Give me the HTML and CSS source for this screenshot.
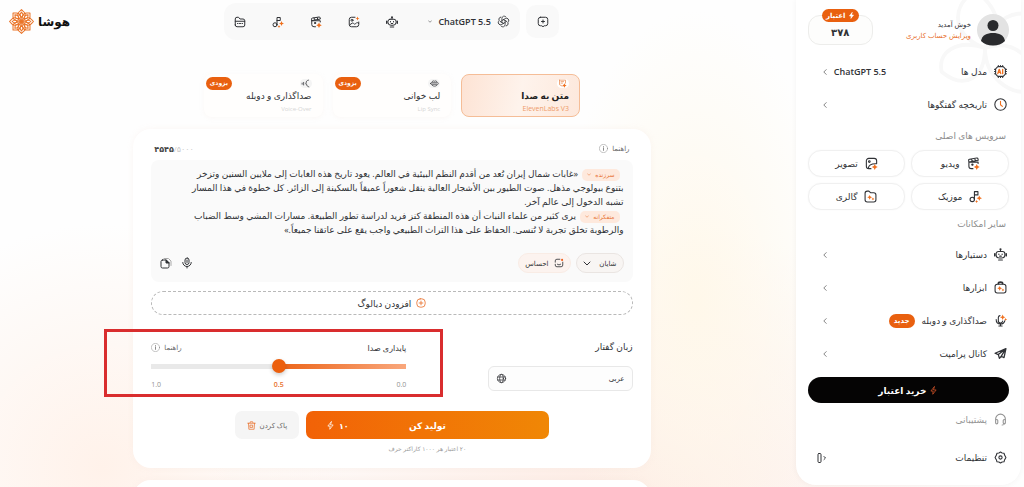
FILE: index.html
```html
<!DOCTYPE html>
<html lang="fa" dir="rtl">
<head>
<meta charset="utf-8">
<meta name="viewport" content="width=device-width, initial-scale=1">
<title>هوشا</title>
<link rel="stylesheet" href="styles.css">
</head>
<body>
<svg class="sprite" aria-hidden="true">
  <symbol id="robot" viewBox="0 0 24 24"><circle cx="12" cy="2.500" r="2" fill="currentColor" stroke="none"/><path d="M12 3v3M8 6.500h8a4 4 0 0 1 4 4V13a6 5.500 0 0 1-6 5.500h-4A6 5.500 0 0 1 4 13v-2.500a4 4 0 0 1 4-4zM8.500 22h7"/><path d="M1.500 10.500v4M22.500 10.500v4" stroke-width="3"/><path d="M9 11v1M15 11v1M10.500 15h3"/></symbol>
  <symbol id="image" viewBox="0 0 24 24"><path d="M14 2.500H7A4.500 4.500 0 0 0 2.500 7v10A4.500 4.500 0 0 0 7 21.500h10a4.500 4.500 0 0 0 4.500-4.500v-5"/><circle cx="8" cy="8.500" r="2"/><path d="M3 18l5-3.500c2-1.400 3 .5 4.500 1.500s2.500-.5 4-2 3-1 5 1"/><path class="spark" d="M19 1l1.200 2.800L23 5l-2.800 1.200L19 9l-1.200-2.800L15 5l2.800-1.200z"/></symbol>
  <symbol id="picture" viewBox="0 0 24 24"><path d="M21.500 12V7A4.500 4.500 0 0 0 17 2.500H7A4.500 4.500 0 0 0 2.500 7v10A4.500 4.500 0 0 0 7 21.500h4"/><circle cx="8" cy="8.500" r="1.500"/><path d="M6 21c1-6 6-9 15-8.500"/><path class="spark" d="M18 13l1.800 3.700L23.500 18.500l-3.700 1.800L18 24l-1.800-3.700-3.700-1.800 3.700-1.800z"/></symbol>
  <symbol id="video" viewBox="0 0 24 24"><path d="M11 21.500H8A4.500 4.500 0 0 1 3.500 17V9.500h17V12M3.500 9.500L3 6.500a2 2 0 0 1 1.600-2.300L18 2a2 2 0 0 1 2.300 1.600l.4 2.400-17 3.200M8 4l2 4M14 3l2 4"/><circle cx="10" cy="14" r="1.200" fill="currentColor"/><path class="spark" d="M18 13l1.800 3.700L23.500 18.500l-3.700 1.800L18 24l-1.800-3.700-3.700-1.800 3.700-1.800z"/></symbol>
  <symbol id="music" viewBox="0 0 24 24"><circle cx="6" cy="17.500" r="4"/><path d="M10 17.500V3h6.500v6H10"/><path class="spark" d="M19 10l1.500 3.500L24 15l-3.500 1.500L19 20l-1.500-3.500L14 15l3.500-1.500zM14 18.500l1 1.700 1.700 1-1.700 1-1 1.700-1-1.700-1.700-1 1.700-1z"/></symbol>
  <symbol id="folder" viewBox="0 0 24 24"><path d="M2.500 18V6A3.500 3.500 0 0 1 6 2.500h3L12 6h6a3.500 3.500 0 0 1 3.500 3.500V18a3.500 3.500 0 0 1-3.500 3.500H6A3.500 3.500 0 0 1 2.500 18zM2.500 10.500h19M7 15h1M11 15h2M16 15h1"/></symbol>
  <symbol id="gallery" viewBox="0 0 24 24"><path d="M2 18V6A4 4 0 0 1 6 2h3l3 3h6a4 4 0 0 1 4 4v9a4 4 0 0 1-4 4H6a4 4 0 0 1-4-4z"/><path class="spark" d="M10.500 9l1.400 3 3.100 1.500-3.100 1.400-1.400 3.100-1.500-3.100L6 13.500 9 12zM16.500 14l1 1.500 1.500 1-1.500 1-1 1.500-1-1.500-1.500-1 1.500-1z"/></symbol>
  <symbol id="tools" viewBox="0 0 24 24"><rect x="2" y="6" width="20" height="16" rx="4"/><path d="M8 5c0-2.500 1-3 4-3s4 .5 4 3" stroke-width="3"/><path class="spark" d="M10.500 9l1.400 3 3.100 1.500-3.100 1.400-1.400 3.100-1.500-3.100L6 13.500 9 12zM16.500 14l1 1.500 1.500 1-1.500 1-1 1.500-1-1.500-1.500-1 1.500-1z"/></symbol>
  <symbol id="mic" viewBox="0 0 24 24"><rect x="8" y="2" width="8" height="13" rx="4"/><path d="M3.500 11a8.500 8 0 0 0 17 0M12 19v3M12 6v5"/></symbol>
  <symbol id="dub" viewBox="0 0 24 24"><path d="M11 3a3.500 3.500 0 0 0-3 3.500V12a4 4 0 0 0 8 1M4 10c0 5 3 8.500 8 8.500s7-2.500 8-6M12 18.500V22M9 22h6"/><path class="spark" d="M16 1l1.600 3.600L21 6l-3.400 1.600L16 11l-1.600-3.400L11 6l3.400-1.400zM21.500 7.500l1 1.500 1.500 1-1.500 1-1 1.500-1-1.500-1.500-1 1.500-1z"/></symbol>
  <symbol id="plane" viewBox="0 0 24 24"><path d="M22 3L2 11.500l6 2.500 2 7 3.500-4 5 2.500zM8 14l14-11-8.500 14" stroke-width="2.400"/></symbol>
  <symbol id="chev" viewBox="0 0 10 16"><path d="M8 2L2 8l6 6"/></symbol>
  <symbol id="chevdown" viewBox="0 0 16 10"><path d="M2 2l6 6 6-6"/></symbol>
  <symbol id="info" viewBox="0 0 24 24"><circle cx="12" cy="12" r="11"/><path d="M12 10.500V17M12 7v.5" stroke-width="2"/></symbol>
  <symbol id="bolt" viewBox="0 0 24 24"><path d="M14 2L5 13.500h6L10 22l9-11.500h-6z"/></symbol>
  <symbol id="plusbox" viewBox="0 0 24 24"><rect x="2" y="2" width="20" height="20" rx="8"/><path d="M12 7.500v9M7.500 12h9"/></symbol>
  <symbol id="newchat" viewBox="0 0 24 24"><path d="M7 2.500h10A4.500 4.500 0 0 1 21.500 7v8a4.500 4.500 0 0 1-4.500 4.500h-2.500L12 21.500l-2.500-2H7A4.500 4.500 0 0 1 2.500 15V7A4.500 4.500 0 0 1 7 2.500zM12 8v6M9 11h6"/></symbol>
</svg>

<div class="app">
  <aside class="sidebar">
    <svg class="watermark" viewBox="0 0 100 100" aria-hidden="true"><path d="M50 50C20 40 10 10 40-10C65 10 70 30 50 50ZM50 50C80 40 105 60 100 95C75 100 50 80 50 50ZM50 50C50 80 30 95 5 75C0 55 20 40 50 50ZM50 50C60 20 80 5 110 20"/></svg>
    <div class="profile">
      <svg class="avatar" viewBox="0 0 32 32" aria-hidden="true"><circle cx="16" cy="16" r="16" fill="#e3e3e3"/><circle cx="16" cy="11.500" r="5.500" fill="#292a2d"/><path d="M4 27c1-6 6-8 12-8s11 2 12 8c-6 6-18 6-24 0z" fill="#292a2d"/></svg>
      <div class="welcome"><span>خوش آمدید</span><a href="#">ویرایش حساب کاربری</a></div>
      <div class="credit"><span class="credit-tag"><svg class="solid"><use href="#bolt"/></svg>اعتبار</span><strong>۳۷۸</strong></div>
    </div>

    <nav class="menu">
      <a class="item" href="#"><svg class="icon" viewBox="0 0 24 24"><path d="M7 3h10l4 4v10l-4 4H7l-4-4V7zM8 1v2M12 1v2M16 1v2M8 21v2M12 21v2M16 21v2M1 8h2M1 12h2M1 16h2M21 8h2M21 12h2M21 16h2"/><path d="M7 16l2.500-8h.5l2.500 8M8 13.500h4M16 8v8" stroke="#f0701e" stroke-width="2.400"/></svg><span>مدل ها</span><b class="model">ChatGPT 5.5</b><svg class="chev"><use href="#chev"/></svg></a>
      <a class="item" href="#"><svg class="icon" viewBox="0 0 24 24"><circle cx="12" cy="12" r="10.500"/><path d="M12 6v6.500l3.500 3" stroke="#f0701e"/></svg><span>تاریخچه گفتگوها</span><svg class="chev"><use href="#chev"/></svg></a>
    </nav>
    <h2 class="group">سرویس های اصلی</h2>
    <div class="services">
      <button type="button"><svg class="icon"><use href="#video"/></svg>ویدیو</button>
      <button type="button"><svg class="icon"><use href="#picture"/></svg>تصویر</button>
      <button type="button"><svg class="icon"><use href="#music"/></svg>موزیک</button>
      <button type="button"><svg class="icon"><use href="#gallery"/></svg>گالری</button>
    </div>
    <h2 class="group">سایر امکانات</h2>
    <nav class="menu">
      <a class="item" href="#"><svg class="icon"><use href="#robot"/></svg><span>دستیارها</span><svg class="chev"><use href="#chev"/></svg></a>
      <a class="item" href="#"><svg class="icon"><use href="#tools"/></svg><span>ابزارها</span><svg class="chev"><use href="#chev"/></svg></a>
      <a class="item" href="#"><svg class="icon"><use href="#dub"/></svg><span>صداگذاری و دوبله</span><b class="pill">جدید</b><svg class="chev"><use href="#chev"/></svg></a>
      <a class="item" href="#"><svg class="icon"><use href="#plane"/></svg><span>کانال پرامپت</span><svg class="chev"><use href="#chev"/></svg></a>
    </nav>
    <button class="buy" type="button"><svg><use href="#bolt"/></svg>خرید اعتبار</button>
    <nav class="menu">
      <a class="item muted" href="#"><svg class="icon" viewBox="0 0 24 24"><path d="M3 15v-4a9 9 0 0 1 18 0v4M3 14a2 2 0 0 1 4 0v4a2 2 0 0 1-4 0zM17 14a2 2 0 0 1 4 0v4a2 2 0 0 1-4 0zM20 19c-1 2-2 3-5 3"/></svg><span>پشتیبانی</span></a>
    </nav>
    <div class="item settings"><svg class="icon" viewBox="0 0 24 24"><path d="M12 2l3 1.600 3.500.4 1 3.500L22 12l-2.500 4.500-1 3.500-3.500.4L12 22l-3-1.600-3.500-.4-1-3.500L2 12l2.500-4.500 1-3.500L9 3.600z"/><circle cx="12" cy="12" r="3"/></svg><a href="#">تنظیمات</a><button class="collapse" type="button" aria-label="بستن منو"><svg viewBox="0 0 20 24"><rect x="2" y="3" width="6" height="18" rx="2"/><path d="M14 9l3 3-3 3"/></svg></button></div>
  </aside>

  <div class="page">
    <header class="topbar">
      <div class="toolbar">
        <button class="new-chat" type="button" aria-label="گفتگوی جدید"><svg><use href="#newchat"/></svg></button>
        <div class="modes">
          <label class="model-pick">
            <svg class="gpt" viewBox="0 0 24 24" aria-hidden="true"><path id="petal" d="M9 13.700V6.300a4.300 4.300 0 0 1 7.600-2.700"/><use href="#petal" transform="rotate(60 12 12)"/><use href="#petal" transform="rotate(120 12 12)"/><use href="#petal" transform="rotate(180 12 12)"/><use href="#petal" transform="rotate(240 12 12)"/><use href="#petal" transform="rotate(300 12 12)"/></svg>
            <select aria-label="مدل" dir="ltr"><option>ChatGPT 5.5</option></select>
            <svg class="caret"><use href="#chevdown"/></svg>
          </label>
          <button type="button" aria-label="دستیار"><svg><use href="#robot"/></svg></button>
          <button type="button" aria-label="تصویر"><svg><use href="#image"/></svg></button>
          <button type="button" aria-label="ویدیو"><svg><use href="#video"/></svg></button>
          <button type="button" aria-label="موزیک"><svg><use href="#music"/></svg></button>
          <button type="button" aria-label="گالری"><svg><use href="#folder"/></svg></button>
        </div>
      </div>
      <a class="brand" href="#"><span>هوشا</span><svg viewBox="0 0 48 48" aria-hidden="true"><g id="leafset"><path id="leaf" d="M24 24l-6-9c-2-4-1-8 3-11l3-3 3 3c4 3 5 7 3 11zM24 16l-3-4c0-3 1-4 3-6 2 2 3 3 3 6z"/><use href="#leaf" transform="rotate(90 24 24)"/><use href="#leaf" transform="rotate(180 24 24)"/><use href="#leaf" transform="rotate(270 24 24)"/></g><use href="#leafset" transform="rotate(45 24 24)"/></svg></a>
    </header>

    <main class="content">
      <div class="tabs">
        <button class="tab active" type="button"><span class="tab-icon"><svg viewBox="0 0 24 24"><path d="M4 3h16v8M11 19l-7-4V3M8 7h7M8 11h4"/><path class="spark" d="M17 11l2 4 4 2-4 2-2 4-2-4-4-2 4-2z"/></svg></span><b>متن به صدا</b><small dir="ltr">ElevenLabs V3</small></button>
        <button class="tab" type="button"><span class="tab-icon"><svg viewBox="0 0 24 24"><path d="M2 12c2-4 5-7 8-7l2 1 2-1c3 0 6 3 8 7-2 4-5 7-10 7S4 16 2 12zM6 10h12M6 14h12"/></svg></span><b>لب خوانی</b><small dir="ltr">Lip Sync</small><span class="soon">بزودی</span></button>
        <button class="tab" type="button"><span class="tab-icon"><svg viewBox="0 0 24 24"><path d="M20 3c-5 1-7 4-6 8l-2 2 3 1c0 4 2 6 6 7M7 9v7M3 11v3"/></svg></span><b>صداگذاری و دوبله</b><small dir="ltr">Voice-Over</small><span class="soon">بزودی</span></button>
      </div>

      <section class="card">
        <div class="card-head"><a class="help" href="#">راهنما<svg><use href="#info"/></svg></a><div class="count" dir="ltr"><b>۴۵۴۵</b>/۵۰۰۰</div></div>
        <div class="editor">
          <div class="script" role="textbox" aria-multiline="true" aria-label="متن گفتار">
            <p><button class="mood" type="button">سرزنده<svg><use href="#chevdown"/></svg></button> «غابات شمال إيران تُعد من أقدم النظم البيئية في العالم. يعود تاريخ هذه الغابات إلى ملايين السنين وتزخر<br>بتنوع بيولوجي مذهل. صوت الطيور بين الأشجار العالية ينقل شعوراً عميقاً بالسكينة إلى الزائر. كل خطوة في هذا المسار<br>تشبه الدخول إلى عالم آخر.</p>
            <p><button class="mood" type="button">متفکرانه<svg><use href="#chevdown"/></svg></button> يرى كثير من علماء النبات أن هذه المنطقة كنز فريد لدراسة تطور الطبيعة. مسارات المشي وسط الضباب<br>والرطوبة تخلق تجربة لا تُنسى. الحفاظ على هذا التراث الطبيعي واجب يقع على عاتقنا جميعاً.»</p>
          </div>
          <div class="editor-bar">
            <label class="voice"><select aria-label="گوینده"><option>شایان</option></select><svg><use href="#chevdown"/></svg></label>
            <button class="feeling" type="button"><svg viewBox="0 0 24 24"><path d="M14 3H7a4 4 0 0 0-4 4v3M3 15v2a4 4 0 0 0 4 4h10a4 4 0 0 0 4-4v-7M8 15c2 2 6 2 8 0"/><circle cx="19.500" cy="4.500" r="2.500" fill="#ed5c19" stroke="none"/></svg>احساس</button>
            <div class="editor-tools">
              <button type="button" aria-label="ضبط صدا"><svg><use href="#mic"/></svg></button>
              <button type="button" aria-label="رونوشت"><svg viewBox="0 0 24 24"><path d="M8 3h9l5 5v9" stroke="#aaa"/><path d="M5 6h7l6 6v7a3 3 0 0 1-3 3H5a3 3 0 0 1-3-3V9a3 3 0 0 1 3-3z"/><path d="M12 6v6h6z" fill="currentColor"/></svg></button>
            </div>
          </div>
        </div>
        <button class="add" type="button"><svg><use href="#plusbox"/></svg>افزودن دیالوگ</button>

        <div class="options">
          <div class="language">
            <label for="lang">زبان گفتار</label>
            <div class="field"><select id="lang"><option>عربی</option></select><svg viewBox="0 0 24 24"><circle cx="12" cy="12" r="11"/><ellipse cx="12" cy="12" rx="5" ry="11"/><path d="M2 8h20M2 16h20"/></svg></div>
          </div>
          <div class="stability">
            <div class="stability-head"><label for="stab">پایداری صدا</label><a class="help" href="#">راهنما<svg><use href="#info"/></svg></a></div>
            <input id="stab" type="range" min="0" max="1" step="0.1" value="0.5">
            <div class="scale"><span>0.0</span><b>0.5</b><span>1.0</span></div>
            <div class="highlight"></div>
          </div>
        </div>

        <div class="actions">
          <button class="generate" type="button"><span>تولید کن</span><span class="cost">۱۰<svg><use href="#bolt"/></svg></span></button>
          <button class="clear" type="button">پاک کردن<svg viewBox="0 0 24 24"><path d="M2 6h20M8 5l1-3h6l1 3M4 6l1 16h14l1-16M9 11h6v6H9z"/></svg></button>
          <p class="note">۲۰ اعتبار هر ۱۰۰۰ کاراکتر حرف</p>
        </div>
      </section>
      <section class="card next"></section>
    </main>
  </div>
</div>
</body>
</html>
```

FILE: styles.css
```css
* { box-sizing: border-box; }

body {
  margin: 0;
  font-family: "Open Sans", "DejaVu Sans", sans-serif;
  font-size: 9px;
  color: #303236;
  background:
    radial-gradient(ellipse 14% 60% at 68% 62%, #fff8ea 0%, transparent 100%),
    radial-gradient(ellipse 40% 60% at 60% 105%, #fdebe3 0%, transparent 100%),
    radial-gradient(ellipse 24% 50% at 10% 96%, #fff2ea 0%, transparent 100%),
    #fefefe;
}

button, select, input { font: inherit; color: inherit; }
button { border: 0; padding: 0; background: none; }
a { color: inherit; text-decoration: none; }
p, h2 { margin: 0; }

select {
  appearance: none;
  border: 0;
  padding: 0;
  background: none;
}

svg {
  width: 12px;
  height: 12px;
  flex: none;
  fill: none;
  stroke: currentColor;
  stroke-width: 2;
  stroke-linecap: round;
  stroke-linejoin: round;
  overflow: visible;
}

.sprite { position: absolute; width: 0; height: 0; }
.spark { fill: #f0701e; stroke: none; }
.solid { fill: currentColor; }

.app { display: flex; height: 100vh; overflow: hidden; }

/* Sidebar */
.sidebar {
  position: relative;
  isolation: isolate;
  flex: none;
  display: flex;
  flex-direction: column;
  width: 22%;
  margin: 0 3px 2px 12px;
  padding: 8px 12px;
  overflow: hidden;
  border-radius: 0 0 20px 20px;
  background: #fff;
  box-shadow: 0 0 6px #0000000c;
}

.watermark {
  position: absolute;
  z-index: -1;
  top: 0;
  right: -12px;
  width: 96px;
  height: 96px;
  stroke: #f8f8f8;
  stroke-width: 4;
}

.profile {
  position: relative;
  display: flex;
  align-items: center;
  gap: 6px;
  height: 47px;
  padding-bottom: 4px;
}

.avatar { width: 32px; height: 32px; stroke: none; }
.welcome { display: flex; flex-direction: column; font-size: 7px; line-height: 11px; }
.welcome a { color: #e8712e; }

.credit {
  position: relative;
  display: flex;
  justify-content: center;
  align-items: center;
  width: 65px;
  height: 30px;
  padding-top: 4px;
  margin-inline-start: auto;
  border: 1px solid #ededeb;
  border-radius: 12px;
  background: #fdfdfc;
  font-size: 10px;
}

.credit-tag {
  position: absolute;
  top: -7px;
  display: flex;
  align-items: center;
  gap: 2px;
  height: 13px;
  padding: 0 4px;
  border-radius: 7px;
  background: #e9600f;
  color: #fff;
  font-size: 7px;
  font-weight: bold;
}

.credit-tag svg { width: 7px; height: 7px; }

.item { display: flex; align-items: center; gap: 7px; height: 33px; padding: 0 2px; }
.icon { width: 13px; height: 13px; }
.chev { width: 4px; height: 8px; margin-inline: auto 13px; color: #666; }
.model { margin-inline-start: auto; font-weight: 600; }
.model + .chev { margin-inline-start: 0; }
.pill { padding: 0 5px; border-radius: 7px; background: #e9600f; color: #fff; font-size: 7px; line-height: 14px; }
.group { font-size: 9px; font-weight: normal; line-height: 29px; padding: 0 3px; color: #8b8b8b; }
.services + .group { line-height: 28px; }

.services { display: grid; grid-template-columns: 1fr 1fr; gap: 6px; }

.services button {
  display: flex;
  align-items: center;
  justify-content: center;
  gap: 7px;
  height: 27px;
  border: 1px solid #f0f0f0;
  border-radius: 13px;
  background: #fff;
  box-shadow: 0 0 2px #0000000a;
}

.buy {
  display: flex;
  flex: none;
  align-items: center;
  justify-content: center;
  gap: 3px;
  height: 26px;
  margin-top: 7px;
  border-radius: 13px;
  background: #050404;
  color: #fff;
  font-weight: bold;
}

.buy svg { width: 9px; height: 9px; color: #d7562a; }
.muted { color: #949494; }
.settings { margin-top: 5px; }
.collapse { margin-inline: auto 6px; height: 12px; }

/* Top bar */
.page { flex: 1; min-width: 0; }

.topbar {
  display: grid;
  grid-template-columns: 1fr auto 1fr;
  align-items: center;
  height: 43px;
  padding: 0 9px;
}

.toolbar { grid-column: 2; display: flex; align-items: center; gap: 6px; }
.new-chat { display: grid; place-items: center; width: 33px; height: 33px; border-radius: 10px; background: #f9f9f9; }

.modes {
  display: flex;
  align-items: center;
  gap: 26px;
  height: 37px;
  padding: 0 10px;
  border-radius: 12px;
  background: #f9f9f9;
}

.modes button, .modes button svg { display: block; width: 12px; height: 12px; }
.modes .spark { fill: currentColor; }
.model-pick { display: flex; align-items: center; gap: 6px; margin-inline-end: 4px; }
.model-pick select { font-weight: 600; }
.gpt { width: 13px; height: 13px; stroke-width: 1.5; }
.caret { width: 4px; height: 3px; }

.brand {
  display: flex;
  align-items: center;
  justify-self: end;
  gap: 4px;
  color: #111;
  font-size: 12px;
  font-weight: bold;
}

.brand svg { width: 25px; height: 25px; color: #ea7529; }

/* Tabs */
.content { display: flex; flex-direction: column; align-items: center; padding-top: 31px; }
.tabs { display: grid; grid-template-columns: repeat(3, 1fr); gap: 10px; width: 48%; }

.tab {
  position: relative;
  display: flex;
  flex-direction: column;
  align-items: flex-start;
  height: 43px;
  padding: 4px 10px;
  border: 1px solid transparent;
  border-radius: 8px;
  background: #fffefd;
  text-align: right;
}

.tab:not(.active) { box-shadow: 0 1px 4px #f5e7e040; }
.tab-icon { display: grid; place-items: center; width: 12px; height: 12px; border-radius: 6px; background: #f4f4f4; }
.tab-icon svg { width: 9px; height: 9px; }
.tab b { font-weight: normal; line-height: 16px; }
.tab small { font-size: 6px; line-height: 10px; color: #d5d5d5; }
.tab.active { border-color: #f5bd97; background: linear-gradient(100deg, #fde3d4, #fef3ec 50%, #fde8dc); }
.tab.active b { font-weight: bold; color: #222; }
.tab.active small { font-size: 7px; color: #ee9b69; }
.tab.active .tab-icon { color: #ea8b52; background: #fff; }

.soon {
  position: absolute;
  top: 2px;
  left: 1px;
  padding: 0 4px;
  border-radius: 7px;
  background: #e9600f;
  color: #fff;
  font-size: 6px;
  font-weight: bold;
  line-height: 13px;
}

/* Dialogue card */
.card {
  width: 66%;
  margin-top: 12px;
  padding: 12px 18px;
  border-radius: 18px;
  background: #fff;
  box-shadow: 0 0 6px #f5e7e050;
}

.card-head, .stability-head { display: flex; justify-content: space-between; align-items: center; }
.card-head { height: 15px; padding: 0 3px; }
.help { display: flex; align-items: center; gap: 4px; font-size: 7px; color: #666; }
.help svg { width: 9px; height: 9px; stroke-width: 1; }
.count { font-size: 8px; color: #ccc; }
.count b { color: #444; }

.editor { margin-top: 4px; padding: 7px 9px; border-radius: 8px; background: #fafafa; }
.script { height: 84px; line-height: 14px; white-space: nowrap; }

.mood {
  display: inline-flex;
  align-items: center;
  gap: 4px;
  height: 12px;
  margin-inline: 4px 2px;
  padding: 0 5px;
  border-radius: 5px;
  background: #fee9dd;
  color: #e87435;
  font-size: 6px;
  vertical-align: middle;
}

.mood svg { width: 4px; height: 3px; }
.editor-bar { display: flex; align-items: center; gap: 5px; height: 24px; }

.voice, .feeling {
  display: flex;
  align-items: center;
  gap: 8px;
  height: 20px;
  padding: 0 6px;
  border: 1px solid #eae5e2;
  border-radius: 10px;
  background: #f8f5f3;
  font-size: 7px;
}

.voice svg { width: 8px; height: 5px; }
.feeling { gap: 5px; border-color: #f9ece5; background: #fcf3ef; }
.feeling svg { width: 10px; height: 10px; }
.editor-tools { display: flex; gap: 9px; margin-inline-start: auto; }
.editor-tools button, .editor-tools svg { display: block; width: 12px; height: 12px; }

.add {
  display: flex;
  align-items: center;
  justify-content: center;
  gap: 5px;
  width: 100%;
  height: 24px;
  margin-top: 9px;
  border: 1px dashed #b9b9b9;
  border-radius: 12px;
}

.add svg { width: 10px; height: 10px; color: #e8712e; }

.options { display: flex; justify-content: space-between; margin-top: 25px; }
.language { width: 30%; }
.language label { display: block; line-height: 14px; }

.field {
  display: flex;
  align-items: center;
  height: 25px;
  margin-top: 12px;
  padding: 0 7px;
  border: 1px solid #e8e8e8;
  border-radius: 6px;
  background: #fdfdfd;
}

.field select { flex: 1; font-size: 7px; }
.field svg { width: 9px; height: 9px; margin-inline-end: 1px; }

.stability { position: relative; width: 53%; }
.stability-head { height: 14px; font-size: 8px; }

.stability input {
  appearance: none;
  display: block;
  width: 100%;
  height: 16px;
  margin: 4px 0 0;
  border-radius: 3px;
  background: linear-gradient(to left, #f9a77c, #ec6418 50%, #e9e9e9 50%) center / 100% 5px no-repeat;
}

.stability input::-webkit-slider-thumb {
  appearance: none;
  width: 14px;
  height: 14px;
  border-radius: 50%;
  background: #ec5f0d;
  box-shadow: 0 2px 4px #0003;
}

.scale { display: flex; justify-content: space-between; margin-top: 5px; font-size: 7px; line-height: 12px; color: #929292; }
.scale b { font-weight: 600; color: #e8712e; }

.highlight {
  position: absolute;
  inset: -11px -37px -6px -47px;
  border: 3px solid #d92d2e;
  pointer-events: none;
}

.actions {
  display: grid;
  grid-template-columns: 243px 64px;
  justify-content: center;
  column-gap: 7px;
  row-gap: 3px;
  margin-top: 20px;
}

.generate {
  position: relative;
  display: flex;
  align-items: center;
  justify-content: center;
  height: 28px;
  border-radius: 7px;
  background: linear-gradient(to left, #f08705, #f26207);
  color: #fff;
  font-weight: bold;
}

.cost { position: absolute; left: 20px; display: flex; align-items: center; gap: 4px; font-size: 8px; }
.cost svg { width: 9px; height: 9px; }

.clear {
  display: flex;
  align-items: center;
  justify-content: center;
  gap: 4px;
  height: 28px;
  border-radius: 7px;
  background: #f5f5f5;
  font-size: 7px;
  color: #666;
}

.clear svg { width: 9px; height: 9px; color: #e8712e; }
.note { text-align: center; font-size: 6px; line-height: 14px; color: #999; }
.next { height: 40px; }
```
